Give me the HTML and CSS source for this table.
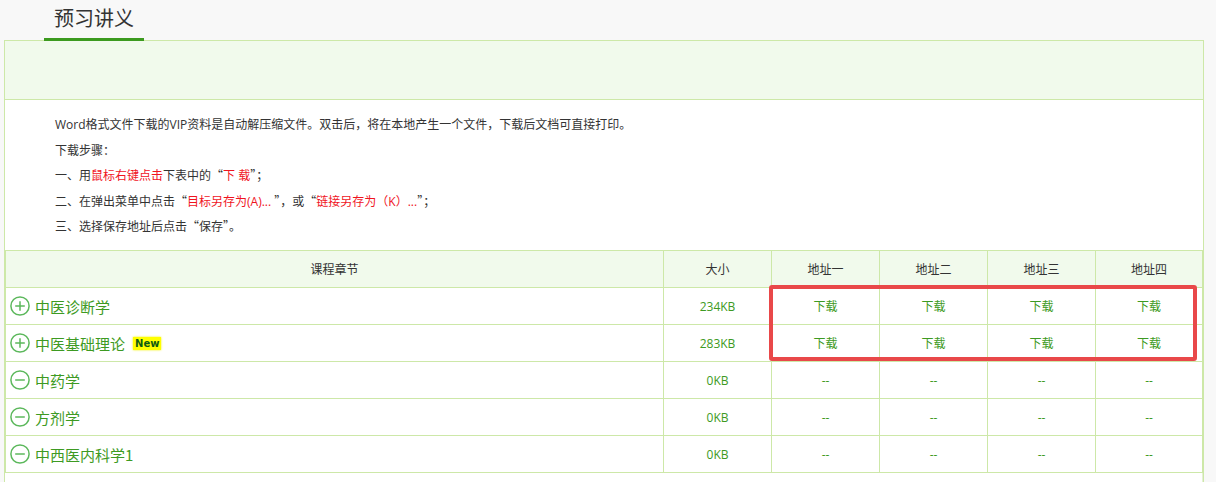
FILE: index.html
```html
<!DOCTYPE html>
<html lang="zh-CN">
<head>
<meta charset="utf-8">
<title>预习讲义</title>
<link rel="stylesheet" href="styles.css">
</head>
<body>
<div class="page-head">
  <span class="tab">预习讲义</span>
</div>
<div class="box">
  <div class="band"></div>
  <div class="notes">
    <p>Word格式文件下载的VIP资料是自动解压缩文件。双击后，将在本地产生一个文件，下载后文档可直接打印。</p>
    <p>下载步骤：</p>
    <p>一、用<span class="red">鼠标右键点击</span>下表中的<span class="q">“</span><span class="red">下 载</span><span class="q">”</span>；</p>
    <p>二、在弹出菜单中点击<span class="q">“</span><span class="red">目标另存为(A)... </span><span class="q">”</span>，或<span class="q">“</span><span class="red">链接另存为（K）...</span><span class="q">”</span>；</p>
    <p>三、选择保存地址后点击<span class="q">“</span>保存<span class="q">”</span>。</p>
  </div>
  <div class="table-wrap">
    <table class="files">
      <colgroup>
        <col class="c-name"><col class="c-size"><col class="c-addr"><col class="c-addr"><col class="c-addr"><col>
      </colgroup>
      <thead>
        <tr><th>课程章节</th><th>大小</th><th>地址一</th><th>地址二</th><th>地址三</th><th>地址四</th></tr>
      </thead>
      <tbody>
        <tr>
          <td class="name"><span class="nm"><svg class="ico" viewBox="0 0 20 20" width="20" height="20"><circle cx="10" cy="10" r="9.1"/><path d="M10 5.2V14.8M5.2 10H14.8"/></svg>中医诊断学</span></td>
          <td>234KB</td><td>下载</td><td>下载</td><td>下载</td><td>下载</td>
        </tr>
        <tr>
          <td class="name"><span class="nm"><svg class="ico" viewBox="0 0 20 20" width="20" height="20"><circle cx="10" cy="10" r="9.1"/><path d="M10 5.2V14.8M5.2 10H14.8"/></svg>中医基础理论<span class="new">New</span></span></td>
          <td>283KB</td><td>下载</td><td>下载</td><td>下载</td><td>下载</td>
        </tr>
        <tr>
          <td class="name"><span class="nm"><svg class="ico" viewBox="0 0 20 20" width="20" height="20"><circle cx="10" cy="10" r="9.1"/><path d="M5.2 10H14.8"/></svg>中药学</span></td>
          <td>0KB</td><td>--</td><td>--</td><td>--</td><td>--</td>
        </tr>
        <tr>
          <td class="name"><span class="nm"><svg class="ico" viewBox="0 0 20 20" width="20" height="20"><circle cx="10" cy="10" r="9.1"/><path d="M5.2 10H14.8"/></svg>方剂学</span></td>
          <td>0KB</td><td>--</td><td>--</td><td>--</td><td>--</td>
        </tr>
        <tr>
          <td class="name"><span class="nm"><svg class="ico" viewBox="0 0 20 20" width="20" height="20"><circle cx="10" cy="10" r="9.1"/><path d="M5.2 10H14.8"/></svg>中西医内科学1</span></td>
          <td>0KB</td><td>--</td><td>--</td><td>--</td><td>--</td>
        </tr>
      </tbody>
    </table>
    <div class="mark"></div>
  </div>
  <div class="tail"></div>
</div>
</body>
</html>
```
FILE: styles.css
```css
html, body {
  margin: 0;
  padding: 0;
}
body {
  background: #f8f8f8;
  font-family: "Open Sans", "Noto Sans CJK SC", sans-serif;
  color: #333;
  font-size: 12px;
}
.page-head {
  height: 40px;
  padding-left: 44px;
}
.tab {
  display: inline-block;
  width: 100px;
  height: 38px;
  line-height: 36px;
  text-align: center;
  font-size: 20px;
  color: #333;
  font-family: "Noto Sans CJK SC", sans-serif;
  border-bottom: 3px solid #3c9a1f;
}
.box {
  margin-left: 4px;
  width: 1200px;
  box-sizing: border-box;
  border: 1px solid #cde8a8;
  border-bottom: 0;
  background: #fff;
}
.band {
  height: 58px;
  background: #f1faec;
  border-bottom: 1px solid #cde8a8;
}
.notes {
  padding: 12px 0 10.5px 50px;
  line-height: 25.5px;
  font-size: 12px;
}
.notes p {
  margin: 0;
  height: 25.5px;
}
.q {
  font-family: "Noto Sans CJK SC", sans-serif;
  line-height: 12px;
}
.red {
  color: #f0141e;
}
.table-wrap {
  position: relative;
}
.files {
  width: 100%;
  table-layout: fixed;
  border-collapse: collapse;
  font-size: 12px;
}
.c-name { width: 658px; }
.c-size { width: 108px; }
.c-addr { width: 108px; }
.files th,
.files td {
  border: 1px solid #cde8a8;
  height: 36px;
  padding: 0;
  text-align: center;
  vertical-align: middle;
}
.files th {
  background: #f1faec;
  font-weight: normal;
  color: #333;
}
.files td {
  color: #3d9a22;
}
.files td.name {
  text-align: left;
  padding-left: 4px;
  font-size: 15px;
  font-family: "Noto Sans CJK SC", sans-serif;
}
.nm {
  display: flex;
  align-items: center;
}
.ico {
  flex: none;
  margin-right: 5px;
  fill: none;
  stroke: #5cb85c;
  stroke-width: 1.5;
}
.new {
  margin-left: 8px;
  padding: 1px 2px;
  background: #ffff00;
  box-shadow: 0 0 2px #f2f200;
  color: #0e5a12;
  font-family: "DejaVu Sans", sans-serif;
  font-weight: bold;
  font-size: 10px;
  line-height: 11px;
}
.mark {
  position: absolute;
  left: 764px;
  top: 35px;
  width: 428px;
  height: 76px;
  box-sizing: border-box;
  border: 4px solid #e94849;
  border-radius: 3px;
}
.tail {
  height: 20px;
  border-right: 1px solid #e4f0d4;
}
```
